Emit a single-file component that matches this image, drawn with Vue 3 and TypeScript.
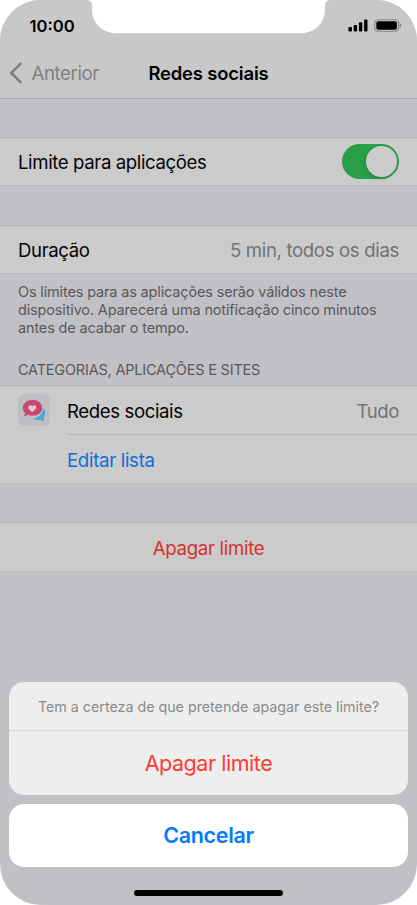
<script setup lang="ts">
import { ref } from 'vue'

const enabled = ref(true)
const note: string[] = [
  'Os limites para as aplicações serão válidos neste',
  'dispositivo. Aparecerá uma notificação cinco minutos',
  'antes de acabar o tempo.',
]
</script>

<template>
  <main class="phone">
    <header class="top">
      <div class="status">
        <svg class="notch" width="245" height="34" viewBox="0 0 245 34" aria-hidden="true">
          <path d="M0 0C4 0 6 2 6 6V9C6 23 16 33 30 33.2H215C229 33 239 23 239 9V6C239 2 241 0 245 0Z" fill="#fff" />
        </svg>
        <span class="time">10:00</span>
        <div class="indicators">
          <svg width="20" height="13" viewBox="0 0 20 13" aria-hidden="true">
            <rect x="0.4" y="8" width="3.6" height="4.5" rx="1" />
            <rect x="5.7" y="6" width="3.4" height="6.5" rx="1" />
            <rect x="10.9" y="3.3" width="3.4" height="9.2" rx="1" />
            <rect x="16.1" y="0.5" width="3.4" height="12" rx="1" />
          </svg>
          <svg width="28" height="13" viewBox="0 0 28 13" aria-hidden="true">
            <rect x="0.7" y="0.7" width="24" height="11.6" rx="3.6" fill="none" stroke="#858585" stroke-width="1.1" />
            <rect x="2.3" y="2.2" width="20.6" height="8.6" rx="2" />
            <path d="M25.8 4.2Q27.4 5 27.4 6.5T25.8 8.8Z" fill="#858585" />
          </svg>
        </div>
      </div>
      <nav class="nav">
        <a class="back">
          <svg width="14" height="22" viewBox="0 0 14 22" aria-hidden="true">
            <path d="M11.5 1.8L2.2 11l9.3 9.2" fill="none" stroke="#808080" stroke-width="2.6" stroke-linecap="round" stroke-linejoin="round" />
          </svg>
          <span class="back-label">Anterior</span>
        </a>
        <h1 class="title">Redes sociais</h1>
      </nav>
    </header>

    <section class="group first">
      <div class="row">
        <span>Limite para aplicações</span>
        <button class="switch" :class="{ on: enabled }" role="switch" :aria-checked="enabled" @click="enabled = !enabled"><i class="knob" /></button>
      </div>
    </section>

    <section class="group second">
      <div class="row">
        <span>Duração</span>
        <span class="value schedule">5 min, todos os dias</span>
      </div>
    </section>
    <p class="note">
      <span v-for="line in note" :key="line" class="note-line">{{ line }}</span>
    </p>

    <h2 class="caption">CATEGORIAS, APLICAÇÕES E SITES</h2>
    <section class="group list">
      <div class="row item">
        <svg class="app-icon" width="32" height="32" viewBox="0 0 32 32" aria-hidden="true">
          <rect width="32" height="32" rx="6.5" fill="#bfbfc3" />
          <path d="M25.4 14C27.8 17.2 27.8 21.2 25.6 23.8L26.2 27.2L21.5 25.9C18.4 26.3 16 25.8 14.6 24.6C20.6 24 25 20 25.4 14Z" fill="#48a8d6" />
          <path d="M14.5 6C20 6 24.2 9.3 24.2 14S20 21.7 14.5 21.7Q11.8 21.7 9.8 20.8L6 22.6L7 18.9Q4.8 16.9 4.8 14C4.8 9.3 9 6 14.5 6Z" fill="#cb4573" />
          <path d="M14.2 18.3L10.9 15C8.7 12.6 12.2 9.5 14.2 12.2C16.2 9.5 19.7 12.6 17.5 15Z" fill="#d6d0d3" />
        </svg>
        <span>Redes sociais</span>
        <span class="value">Tudo</span>
      </div>
      <div class="row edit"><a>Editar lista</a></div>
    </section>

    <section class="group remove">
      <div class="row centered"><a>Apagar limite</a></div>
    </section>

    <footer class="sheet">
      <div class="card">
        <p class="question"><span>Tem a certeza de que pretende apagar este limite?</span></p>
        <button class="action destructive"><span>Apagar limite</span></button>
      </div>
      <button class="action cancel"><span>Cancelar</span></button>
      <div class="home" />
    </footer>
  </main>
</template>

<style>
body { margin: 0; background: #fff; }
</style>

<style scoped>
* { box-sizing: border-box; }
.phone {
  width: 417px; height: 905px; overflow: hidden; border-radius: 41px;
  display: flex; flex-direction: column; background: #c1c0c5; color: #050505;
  font-family: Inter, "Liberation Sans", sans-serif; font-size: 18.6px; letter-spacing: -0.39px;
}
span, a, h1, h2 { white-space: nowrap; }
button { border: 0; padding: 0; font-family: inherit; }
.top { height: 99px; background: #c8c8c8; border-bottom: 1px solid #aaaaac; }
.status { position: relative; height: 50px; padding: 1px 15px 0 29.5px; display: flex; align-items: center; justify-content: space-between; }
.notch { position: absolute; left: 86px; top: 0; }
.time { font-size: 16.6px; font-weight: 600; color: #000; letter-spacing: 0; }
.indicators { display: flex; gap: 6px; }
.nav { height: 46px; display: grid; grid-template-columns: 1fr auto 1fr; align-items: center; }
.back { display: flex; align-items: center; gap: 8.5px; padding-left: 9px; color: #808080; }
.title { margin: 0; font-size: 18.4px; font-weight: 600; letter-spacing: -0.15px; color: #000; }
.group { background: #cbcbcb; border-top: 1px solid #b5b5b8; border-bottom: 1px solid #b9b9bb; }
.first { margin-top: 38px; }
.second { margin-top: 39px; }
.row { height: 47px; padding: 0 18px; display: flex; align-items: center; justify-content: space-between; }
.value { color: #737373; }
.schedule { letter-spacing: -0.34px; }
.switch { width: 56.6px; height: 35px; border-radius: 18px; background: #aaa; padding: 2px 1.6px; display: flex; }
.switch.on { background: #2a9f47; justify-content: flex-end; }
.knob { width: 31px; height: 31px; border-radius: 50%; background: #cccccc; box-shadow: -1px 2px 4px #0002; }
.note { margin: 9px 18px 0; font-size: 14.5px; line-height: 18px; color: #59595c; height: 54px; letter-spacing: -0.155px; }
.note-line { display: block; }
.caption { margin: 23px 18px 0; height: 25px; font-size: 14.5px; line-height: 20px; font-weight: 400; color: #59595c; letter-spacing: -0.2px; }
.list { height: 99px; }
.item { height: 48px; padding-top: 1px; justify-content: flex-start; gap: 17px; }
.app-icon { margin-top: -1px; }
.item .value { margin-left: auto; }
.edit { height: 49px; margin-left: 67px; padding: 1px 0 0; border-top: 1px solid #b7b7b9; color: #0d6edc; letter-spacing: -0.31px; }
.remove { margin-top: 38px; height: 50px; }
.centered { height: 48px; padding-top: 1px; justify-content: center; color: #d5322c; letter-spacing: -0.3px; }
.sheet { margin-top: auto; height: 223px; padding: 0 9px; display: flex; flex-direction: column; }
.card { height: 113px; border-radius: 15px; background: #eeeeee; overflow: hidden; }
.question { margin: 0; height: 49px; display: flex; align-items: center; justify-content: center; border-bottom: 1px solid #d9d9d9; color: #8b8b8b; font-size: 14.3px; letter-spacing: -0.02px; }
.action { width: 100%; height: 64px; display: flex; align-items: center; justify-content: center; background: transparent; font-size: 21.5px; }
.destructive { color: #ff3b30; letter-spacing: -0.45px; }
.cancel { margin-top: 9px; height: 63px; padding-bottom: 1px; border-radius: 15px; background: #fff; color: #007aff; font-weight: 600; letter-spacing: -0.32px; }
.home { width: 149px; height: 6px; margin: 23px auto 0; border-radius: 3px; background: #000; }
</style>
